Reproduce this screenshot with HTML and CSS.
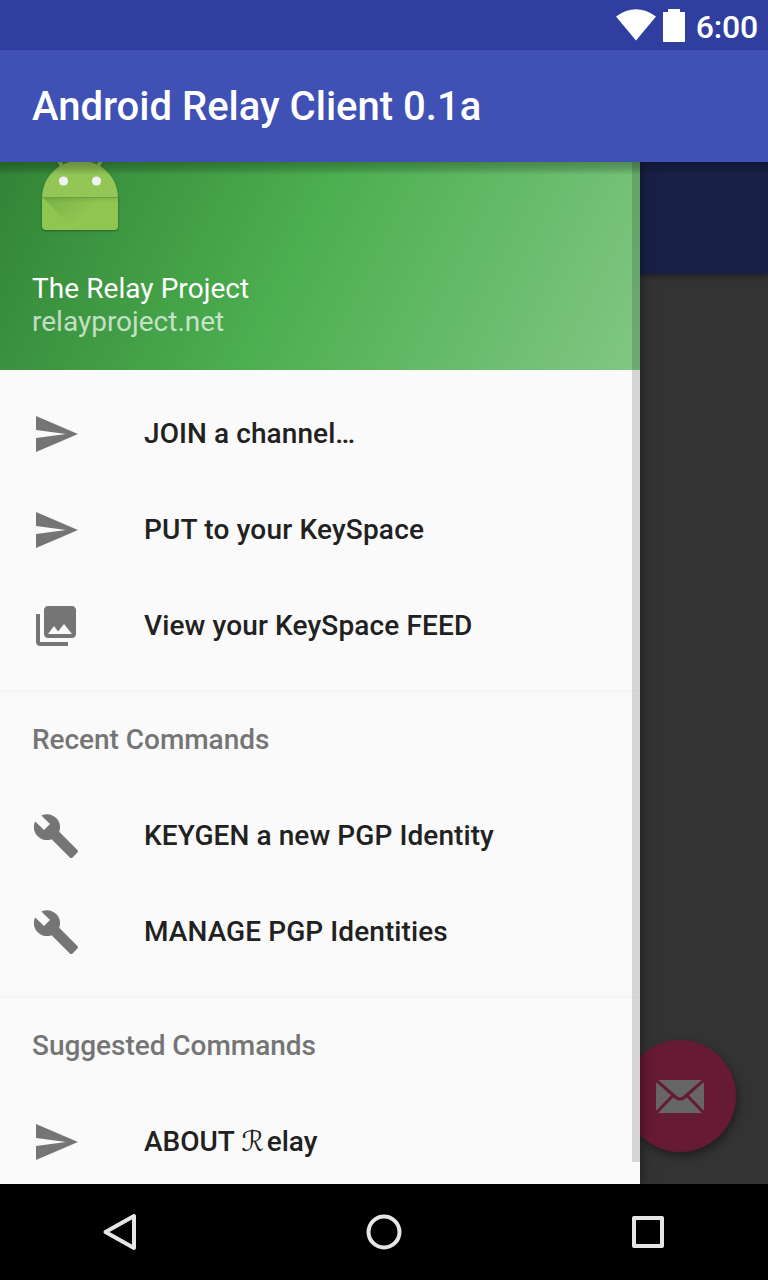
FILE: index.html
```html
<!DOCTYPE html>
<html lang="en">
<head>
<meta charset="utf-8">
<title>Android Relay Client</title>
<link rel="stylesheet" href="styles.css">
</head>
<body>
<svg class="defs" aria-hidden="true">
  <symbol id="send" viewBox="0 0 24 24"><path d="M2.01 21L23 12 2.01 3 2 10l15 2-15 2z"/></symbol>
  <symbol id="gallery" viewBox="0 0 24 24"><path d="M22 16V4c0-1.100-.9-2-2-2H8c-1.100 0-2 .9-2 2v12c0 1.100.9 2 2 2h12c1.100 0 2-.9 2-2zm-11-4l2.030 2.710L16 11l4 5H8l3-4zM2 6v14c0 1.100.9 2 2 2h14v-2H4V6H2z"/></symbol>
  <symbol id="wrench" viewBox="0 0 24 24"><path d="M22.700 19l-9.100-9.100c.9-2.300.4-5-1.500-6.900-2-2-5-2.400-7.400-1.300L9 6 6 9 1.600 4.700C.4 7.100.9 10.100 2.900 12.100c1.900 1.900 4.600 2.400 6.900 1.500l9.100 9.100c.4.4 1 .4 1.400 0l2.300-2.300c.5-.4.5-1.100.1-1.400z"/></symbol>
</svg>
<div class="phone">
  <div class="status-bar">
    <svg class="wifi" viewBox="0 0 40 32"><path d="M0 7.500Q20-7 40 7.500L20 31.500z"/></svg>
    <svg class="battery" viewBox="0 0 22 33"><path d="M5 0h12v3h5v30H0V3h5z"/></svg>
    <span class="clock">6:00</span>
  </div>
  <header class="app-bar"><h1 class="app-title">Android Relay Client 0.1a</h1></header>
  <main class="content">
    <nav class="drawer">
      <div class="drawer-header">
        <svg class="logo" viewBox="0 0 96 96">
          <defs>
            <linearGradient id="fold" x1="0" y1="0" x2="1" y2="0.600">
              <stop offset="0" stop-color="#33691e" stop-opacity=".24"/>
              <stop offset=".65" stop-color="#33691e" stop-opacity="0"/>
            </linearGradient>
            <linearGradient id="crease" x1="0" y1="0" x2="0" y2="1">
              <stop offset="0" stop-color="#33691e" stop-opacity=".2"/>
              <stop offset="1" stop-color="#33691e" stop-opacity="0"/>
            </linearGradient>
          </defs>
          <path class="antenna" d="M25 12l6 10M71 12l-6 10"/>
          <path class="head" d="M10 52C10 31 27 14.500 48 14.500s38 16.500 38 37.500z"/>
          <path class="body" d="M10 51h76v29q0 4-4 4H14q-4 0-4-4z"/>
          <path fill="url(#fold)" d="M10 51h76v33H43z"/>
          <path fill="url(#crease)" d="M10 51h76v5H15z"/>
          <path class="fold-line" d="M10 51.500h76"/>
          <circle class="eye" cx="31.500" cy="35" r="4.600"/>
          <circle class="eye" cx="64.500" cy="35" r="4.600"/>
        </svg>
        <div class="account-name"><span>The Relay Project</span></div>
        <div class="account-site"><span>relayproject.net</span></div>
      </div>
      <div class="menu">
        <a class="item"><svg class="icon"><use href="#send"/></svg><span class="label join">JOIN a channel…</span></a>
        <a class="item"><svg class="icon"><use href="#send"/></svg><span class="label put">PUT to your KeySpace</span></a>
        <a class="item"><svg class="icon"><use href="#gallery"/></svg><span class="label feed">View your KeySpace FEED</span></a>
        <div class="separator"></div>
        <h2 class="subheader"><span>Recent Commands</span></h2>
        <a class="item"><svg class="icon"><use href="#wrench"/></svg><span class="label join">KEYGEN a new PGP Identity</span></a>
        <a class="item"><svg class="icon"><use href="#wrench"/></svg><span class="label join">MANAGE PGP Identities</span></a>
        <div class="separator"></div>
        <h2 class="subheader"><span>Suggested Commands</span></h2>
        <a class="item"><svg class="icon"><use href="#send"/></svg><span class="label">ABOUT <span class="script">ℛ</span>elay</span></a>
      </div>
      <div class="scrollbar"></div>
    </nav>
    <div class="page">
      <div class="page-toolbar"></div>
      <div class="fab">
        <svg class="mail" viewBox="0 0 48 34">
          <path class="sheet" d="M3 0h42l3 3v28l-3 2H3l-3-2V3z"/>
          <path class="flap" d="M0 0l20 17.500q4 3 8 0L48 0M0 33l16.500-17M48 33L31.500 16"/>
        </svg>
      </div>
    </div>
  </main>
  <footer class="nav-bar">
    <svg class="nav-icon" viewBox="0 0 40 40"><path d="M34 4v32L5.500 20z"/></svg>
    <svg class="nav-icon" viewBox="0 0 40 40"><circle cx="20" cy="20" r="15.500"/></svg>
    <svg class="nav-icon" viewBox="0 0 40 40"><rect x="6" y="6" width="28" height="28"/></svg>
  </footer>
</div>
</body>
</html>
```
FILE: styles.css
```css
* { box-sizing: border-box; }
body { margin: 0; font-family: Roboto, sans-serif; }
.defs { display: none; }
.phone { width: 768px; height: 1280px; display: flex; flex-direction: column; overflow: hidden; }

.status-bar { height: 50px; flex: none; background: #303f9f; display: flex; justify-content: flex-end; align-items: flex-start; padding: 9px 10px 0 0; color: #fff; }
.wifi { width: 40px; height: 32px; fill: #fff; margin-right: 7px; }
.battery { width: 22px; height: 33px; fill: #fff; margin-right: 11px; }
.clock { font-size: 32px; font-weight: 500; line-height: 36px; letter-spacing: -0.2px; }

.app-bar { height: 112px; flex: none; background: #3f51b5; display: flex; align-items: center; padding: 2px 0 0 32px; }
.app-title { margin: 0; color: #fff; font-size: 40px; font-weight: 500; line-height: 48px; white-space: nowrap; }

.content { position: relative; height: 1022px; flex: none; display: flex; overflow: hidden; background: #333; }
.content::after { content: ""; position: absolute; inset: 0 0 auto; height: 13px; z-index: 3; background: linear-gradient(rgba(0, 0, 0, .28), rgba(0, 0, 0, .18) 50%, rgba(0, 0, 0, 0)); }

.drawer { position: relative; z-index: 2; width: 640px; height: 1022px; flex: none; background: #fafafa; box-shadow: 0 0 12px rgba(0, 0, 0, .5); }
.drawer-header { height: 208px; overflow: hidden; padding: 0 32px 32px; background: linear-gradient(116.565deg, #2e7d32, #4caf50 50%, #81c784) 0 -112px / 640px 320px no-repeat; display: flex; flex-direction: column; justify-content: flex-end; }
.logo { width: 96px; height: 96px; flex: none; margin-bottom: 30px; filter: drop-shadow(0 1px 1px rgba(0, 0, 0, .35)); }
.antenna { stroke: #8bc34a; stroke-width: 4; }
.head { fill: #92c757; }
.body { fill: #8fc651; }
.fold-line { stroke: #6da33d; stroke-width: 1; }
.eye { fill: #f2f2f2; }
.account-name, .account-site { font-size: 28px; line-height: 33px; color: #fff; white-space: nowrap; }
.account-name { letter-spacing: 0.06px; }
.account-site { color: rgba(255, 255, 255, .7); }

.menu { height: 814px; overflow: hidden; padding-top: 16px; }
.item { height: 96px; padding: 0 32px; display: flex; align-items: center; gap: 64px; font-size: 28px; font-weight: 500; color: #212121; white-space: nowrap; }
.label { padding-bottom: 2px; line-height: 33px; }
.join { letter-spacing: 0.08px; }
.put { letter-spacing: 0.18px; }
.feed { letter-spacing: 0.13px; }
.icon { width: 48px; height: 48px; flex: none; fill: #757575; }
.separator { height: 2px; margin-top: 16px; background: #f6f6f6; }
.subheader { margin: 0; height: 96px; padding: 0 32px 2px; display: flex; align-items: center; font-size: 28px; font-weight: 500; color: #757575; letter-spacing: -0.04px; }
.script { display: inline-block; width: 25.5px; font-family: "DejaVu Serif", "DejaVu Sans", serif; font-weight: 400; font-style: italic; font-size: 28px; line-height: 1; }
.scrollbar { position: absolute; top: 0; right: 0; width: 8px; height: 1000px; background: rgba(0, 0, 0, .145); }

.page { flex: 1; display: flex; flex-direction: column; justify-content: space-between; padding-bottom: 32px; }
.page-toolbar { height: 112px; background: #192048; box-shadow: 0 3px 4px rgba(0, 0, 0, .3); }
.fab { width: 112px; height: 112px; margin-left: -16px; border-radius: 50%; background: #661a33; box-shadow: 2px 4px 8px rgba(0, 0, 0, .4); display: flex; align-items: center; justify-content: center; padding-top: 2px; }
.mail { width: 48px; height: 34px; }
.sheet { fill: #666; }
.flap { fill: none; stroke: #661a33; stroke-width: 3; }

.nav-bar { height: 96px; flex: none; background: #000; display: flex; justify-content: space-between; align-items: center; padding: 0 100px; }
.nav-icon { width: 40px; height: 40px; fill: none; stroke: #e6e6e6; stroke-width: 4; stroke-linejoin: round; }
```
